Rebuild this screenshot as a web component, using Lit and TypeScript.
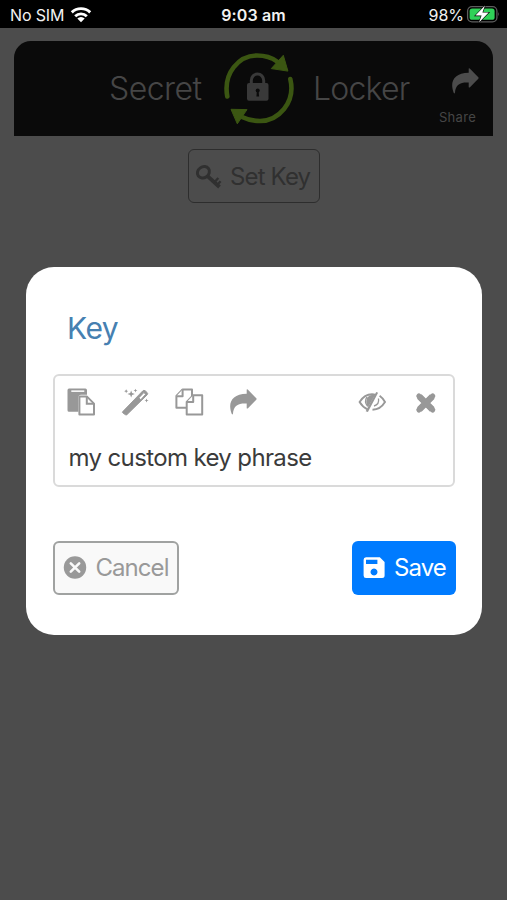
import { LitElement, html, css, svg } from "lit";
import { customElement, property } from "lit/decorators.js";

const icons: Record<string, { box: string; art: unknown }> = {
  wifi: {
    box: "70 6 22 17",
    art: svg`<g fill="none" stroke="#fff" stroke-width="2.9"><path d="M71.800 12.400a13.200 13.200 0 0 1 18.400 0"/><path d="M75.200 16.200a8.300 8.300 0 0 1 11.600 0"/></g><path fill="#fff" d="M77.300 18.600a5.200 5.200 0 0 1 7.400 0L81 22.300z"/>`,
  },
  battery: {
    box: "466 4 34 21",
    art: svg`<rect x="467.600" y="6.600" width="29.300" height="15.300" rx="4.400" fill="none" stroke="#5e5e5e" stroke-width="1.300"/><rect x="469.600" y="8.600" width="25" height="11.200" rx="2.600" fill="#30d158"/><path d="M498.200 12q1.600 2.200 0 4.600z" fill="#666"/><path d="M485 5.600l-9.600 10h6.200l-2.600 6.800 9.700-9.900h-6.300z" fill="#fff" stroke="#000" stroke-width="1.200" paint-order="stroke"/>`,
  },
  logo: {
    box: "220 50 78 78",
    art: svg`<g fill="none" stroke="#3b5612" stroke-width="4.600" stroke-linecap="round"><path d="M227.300 96.500C223 73 239 55.500 257 55.500Q269 55.500 277 61.500"/><path d="M290.300 79C296 103 278 121 260 121Q250 121 242 117"/></g><g fill="#3b5612" stroke="#3b5612" stroke-width="1" stroke-linejoin="round"><path d="M283.300 55.300L287.900 71.100L271.300 68.600z"/><path d="M231 109.300L247 109.600L237.300 123.800z"/></g><path d="M251.300 84v-3.500a6.200 6.500 0 0 1 12.400 0V84" fill="none" stroke="#393939" stroke-width="3"/><rect x="247" y="83" width="21.500" height="17.800" rx="2" fill="#393939"/><circle cx="257.700" cy="90.600" r="2" fill="#0a0a0a"/><path d="M256.900 91h1.700l.5 5.500h-2.700z" fill="#0a0a0a"/>`,
  },
  share: {
    box: "0 0 28 26",
    art: svg`<path fill="currentColor" d="M17.700.6Q18.300 0 19 .7L27.300 9.300Q27.900 10 27.300 10.700L19 19.200Q18.300 19.900 17.700 19.300V14.500C9.500 14.100 4.600 16 3.900 25Q3.400 25.800 2.800 25C-1.500 14 2.500 5.200 17.700 4.700z"/>`,
  },
  key: {
    box: "194 163 29 27",
    art: svg`<g fill="none" stroke="currentColor"><ellipse cx="203.400" cy="172.300" rx="6.300" ry="5.400" transform="rotate(-35 203.400 172.300)" stroke-width="3"/><path d="M207.800 176.300l11.700 10.700" stroke-width="3.800"/><path d="M214.500 182.300l3.800-4.300M217.600 184.500l3-3.300" stroke-width="2.300"/></g>`,
  },
  paste: {
    box: "67 388 29 28",
    art: svg`<path fill="currentColor" d="M69 388.600h16.400q1.600 0 1.600 1.600v4.600h-6q-2.600 0-2.600 2.600v14.400H69q-1.500 0-1.500-1.500v-20.100q0-1.600 1.500-1.600z"/><path fill="#fff" d="M71.300 390.400h13v1.500h-13z"/><path fill="#fff" stroke="currentColor" stroke-width="2" stroke-linejoin="round" d="M79.400 396.600h7.600l7 7v11H79.400z"/><path fill="none" stroke="currentColor" stroke-width="2" d="M86.800 396.600v7.200H94"/>`,
  },
  wand: {
    box: "121 387 28 28",
    art: svg`<path fill="currentColor" stroke="currentColor" stroke-width=".9" fill-rule="evenodd" d="M122.700 410.600l19.200-20.600q1.200-1.300 2.500-.2l1.800 1.700q1.200 1.100 0 2.400l-19.300 19.600q-.9 1-1.900.1l-2.200-1.700q-.9-.6-.1-1.300zM138.200 396.900l1.900 1.800 4.700-5.400-1.700-1.700z"/><path fill="currentColor" d="M130.800 389.400l.9 2.600 2.700.9-2.700 1-.9 2.600-.9-2.600-2.700-1 2.700-.9zM126 388.200l.6 1.400 1.300.6-1.300.6-.6 1.400-.6-1.400-1.300-.6 1.300-.6zM135 387.700l.5 1.300 1.400.5-1.400.6-.5 1.300-.6-1.300-1.300-.6 1.300-.5zM145.700 397.500l.5 1.500 1.500.5-1.500.6-.5 1.500-.6-1.500-1.400-.6 1.400-.5z"/>`,
  },
  copy: {
    box: "175 388 29 28",
    art: svg`<g fill="#fff" stroke="currentColor" stroke-width="2" stroke-linejoin="round"><path d="M182.600 389.500H192v18.200h-15.600V396z"/><path d="M182.600 389.500v6.700h-6.300"/><path d="M193.200 395.300h9v19.200h-15.500v-12.600z"/><path d="M193.200 395.300v6.700h-6.400"/></g>`,
  },
  eye: {
    box: "358 391 28 24",
    art: svg`<g fill="none" stroke="currentColor" stroke-width="1.900"><path d="M367.500 410.300Q362.500 408 359.600 403Q364.500 395.300 372 395.300Q374 395.300 375.500 395.900"/><path d="M379.600 396.800Q383 399.200 385 403Q380.500 410.500 372.500 410.800"/><path d="M366.800 398.200q-3 5 .8 9M378.500 399.500q1 6-4.500 7.500" stroke-width="1.300"/></g><path fill="currentColor" d="M376.200 393l1.900.7-10.200 19.300-2.200-.8z"/><path fill="currentColor" d="M367.300 398.500q2.500-3.500 7.700-2.500l-7 12.300q-3.200-4.700-.7-9.800z"/>`,
  },
  clear: {
    box: "415 392 22 22",
    art: svg`<path d="M419.300 396.500l13 13M432.300 396.500l-13 13" stroke="currentColor" stroke-width="6.400"/><path d="M418.900 396.100l13.800 13.800M432.700 396.100l-13.800 13.800" stroke="currentColor" stroke-width="5.200" stroke-linecap="round"/>`,
  },
  cancel: {
    box: "63 555 24 24",
    art: svg`<circle cx="75" cy="566.500" r="11.200" fill="currentColor"/><path d="M70.800 562.300l8.400 8.400M79.200 562.300l-8.400 8.400" stroke="#f9f9f9" stroke-width="2.600" stroke-linecap="round"/>`,
  },
  save: {
    box: "363 556 22 22",
    art: svg`<path fill="#fff" fill-rule="evenodd" d="M366 556.300h13.800l4.800 4.700v13.500q0 2.500-2.500 2.500H366q-2.400 0-2.400-2.500v-15.700q0-2.500 2.400-2.500zM366 558.700v4.300h11.400v-4.300zM374 567.500a3.500 3.500 0 1 0 .01 0z"/>`,
  },
};

@customElement("ui-icon")
class UiIcon extends LitElement {
  @property() name = "share";
  static styles = css`
    :host { display: block; flex: none; }
    svg { display: block; width: 100%; height: 100%; }
  `;
  render() {
    const icon = icons[this.name];
    return html`<svg viewBox=${icon.box} preserveAspectRatio="none">${icon.art}</svg>`;
  }
}

@customElement("app-root")
class AppRoot extends LitElement {
  static styles = css`
    :host { display: block; position: relative; box-sizing: border-box; width: 507px; height: 900px; overflow: hidden; background: #4c4c4c; font-family: Inter, "Liberation Sans", sans-serif; }
    * { box-sizing: border-box; }
    span, h1 { white-space: nowrap; }
    .status { display: grid; grid-template-columns: 1fr auto 1fr; align-items: center; height: 28px; padding: 2px 7px 0 10px; background: #000; color: #f2f2f2; font-size: 16px; line-height: 26px; }
    .left, .right { display: flex; align-items: center; }
    .left { gap: 6px; }
    .sim { letter-spacing: -.15px; }
    .right { justify-content: flex-end; gap: 2px; }
    .time { font-weight: 600; letter-spacing: .15px; margin-right: 3px; }
    .wifi { width: 22px; height: 17px; margin-top: -2px; }
    .battery { width: 34px; height: 21px; margin-top: -2px; }
    .header { display: flex; align-items: center; margin: 13px 14px 0; height: 95px; border-radius: 17px 17px 0 0; background: #0a0a0a; color: #464646; font-size: 32px; font-weight: 300; padding-left: 95px; }
    .secret { width: 111px; letter-spacing: -.55px; }
    .logo { width: 78px; height: 78px; }
    .locker { margin-left: 15px; width: 123px; letter-spacing: -.8px; }
    .sharebox { display: flex; flex-direction: column; align-items: center; gap: 13px; font-size: 13px; font-weight: 400; line-height: 20px; letter-spacing: .3px; padding-top: 17px; }
    .sharebox ui-icon { width: 28px; height: 26px; margin-left: 15px; color: #4c4c4c; }
    .setkey { display: flex; align-items: center; width: 132px; height: 54px; margin: 13px auto 0 188px; border: 1.500px solid #2d2d2d; border-radius: 6px; color: #303030; font-size: 24px; letter-spacing: -.85px; padding-left: 5px; gap: 7px; }
    .setkey ui-icon { width: 29px; height: 27px; }
    .modal { position: absolute; left: 26px; top: 267px; width: 456px; height: 368px; border-radius: 28px; background: #fff; padding: 40px 27px; }
    h1 { margin: 0 0 0 14px; font-size: 30px; line-height: 42px; font-weight: 400; letter-spacing: -.5px; color: #4680b1; }
    .field { height: 113px; margin-top: 25px; border: 2px solid #dadada; border-radius: 6px; padding: 11px 12px 0; }
    .tools { display: flex; align-items: center; height: 29px; color: #989898; }
    .tools ui-icon { width: 29px; height: 28px; }
    .paste { margin-right: 25px; }
    .copy { margin: 0 25px; }
    .tools .fwd { width: 28px; height: 26px; }
    .tools .eye { width: 28px; height: 24px; margin-left: auto; }
    .tools .clear { width: 22px; height: 22px; margin: 2px 4px 0 29px; }
    .value { display: block; margin: 25px 0 0 1.500px; font-size: 24px; line-height: 34px; letter-spacing: -.63px; color: #3b3b3b; }
    .actions { display: flex; justify-content: space-between; margin-top: 53.500px; }
    .button { display: flex; align-items: center; height: 54px; border-radius: 6px; font-size: 24px; }
    .cancel { width: 126px; border: 2px solid #a0a2a1; background: #f9f9f9; color: #999; padding-left: 8px; gap: 8.500px; letter-spacing: -.95px; }
    .cancel ui-icon { width: 24px; height: 24px; }
    .save { width: 104px; margin-right: -1px; background: #007bff; color: #fff; padding-left: 11px; gap: 9px; letter-spacing: -.9px; }
    .save ui-icon { width: 22px; height: 22px; }
  `;
  render() {
    return html`
      <div class="status">
        <div class="left"><span class="sim">No SIM</span><ui-icon class="wifi" name="wifi"></ui-icon></div>
        <span class="time">9:03 am</span>
        <div class="right"><span class="pct">98%</span><ui-icon class="battery" name="battery"></ui-icon></div>
      </div>
      <div class="header">
        <span class="secret">Secret</span>
        <ui-icon class="logo" name="logo"></ui-icon>
        <span class="locker">Locker</span>
        <div class="sharebox"><ui-icon name="share"></ui-icon><span>Share</span></div>
      </div>
      <div class="setkey"><ui-icon name="key"></ui-icon><span>Set Key</span></div>
      <div class="modal">
        <h1>Key</h1>
        <div class="field">
          <div class="tools">
            <ui-icon class="paste" name="paste"></ui-icon>
            <ui-icon name="wand"></ui-icon>
            <ui-icon class="copy" name="copy"></ui-icon>
            <ui-icon class="fwd" name="share"></ui-icon>
            <ui-icon class="eye" name="eye"></ui-icon>
            <ui-icon class="clear" name="clear"></ui-icon>
          </div>
          <span class="value">my custom key phrase</span>
        </div>
        <div class="actions">
          <div class="button cancel"><ui-icon name="cancel"></ui-icon><span>Cancel</span></div>
          <div class="button save"><ui-icon name="save"></ui-icon><span>Save</span></div>
        </div>
      </div>
    `;
  }
}
